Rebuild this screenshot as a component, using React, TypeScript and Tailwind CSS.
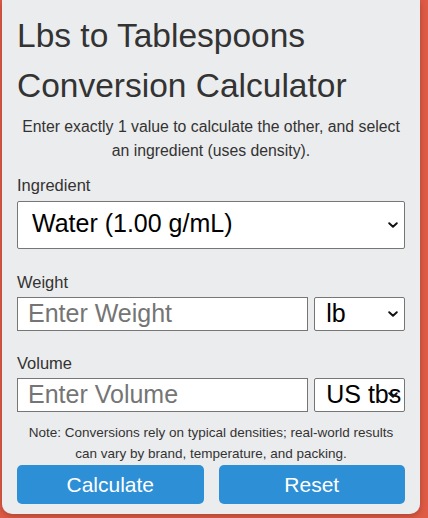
import { useState } from "react";

function Chevron() {
  return (
    <svg
      className="pointer-events-none absolute right-[7px] top-1/2 -translate-y-1/2"
      width="10"
      height="6"
      viewBox="0 0 10 6"
      fill="none"
    >
      <path d="M1.2 1.2 L5 4.8 L8.8 1.2" stroke="#111" strokeWidth="1.9" strokeLinecap="round" strokeLinejoin="round" />
    </svg>
  );
}

export default function App() {
  const [weight, setWeight] = useState("");
  const [volume, setVolume] = useState("");

  return (
    <div className="min-h-screen bg-[#e05b45] font-['Liberation_Sans',Arial,sans-serif] text-[#333]">
      <div className="ml-[2px] w-[418px] rounded-b-[10px] bg-[#ebeced] px-[15px] pb-[10px] shadow-[0_2px_6px_rgba(0,0,0,0.25)]">
        <h1 className="pt-[11px] text-[33.5px] leading-[50px] font-normal text-[#333]">
          Lbs to Tablespoons Conversion Calculator
        </h1>
        <p className="mt-[4px] px-[4px] text-center text-[15.8px] leading-[24px]">
          Enter exactly 1 value to calculate the other, and select an ingredient (uses density).
        </p>

        <label className="mt-[12px] block text-[16.5px] leading-[20px]">Ingredient</label>
        <div className="relative mt-[6px]">
          <select className="block h-[48px] w-full appearance-none rounded-[2px] border border-[#767676] bg-white pb-[2px] pl-[14px] text-[25px] text-black">
            <option>Water (1.00 g/mL)</option>
            <option>All-purpose flour (0.53 g/mL)</option>
            <option>Granulated sugar (0.85 g/mL)</option>
          </select>
          <Chevron />
        </div>

        <label className="mt-[23px] block text-[16.5px] leading-[20px]">Weight</label>
        <div className="mt-[5px] flex gap-[6px]">
          <input
            value={weight}
            onChange={e => setWeight(e.target.value)}
            placeholder="Enter Weight"
            className="h-[34px] w-[292px] min-w-0 border border-[#767676] bg-white px-[10px] text-[25px] text-black placeholder-[#757575]"
          />
          <div className="relative w-[91px]">
            <select className="block h-[34px] w-full appearance-none rounded-[2px] border border-[#767676] bg-white pb-[3px] pl-[11px] pr-0 text-[25px] leading-[28px] text-black">
              <option>lb</option>
              <option>oz</option>
              <option>kg</option>
            </select>
            <Chevron />
          </div>
        </div>

        <label className="mt-[22px] block text-[16.5px] leading-[20px]">Volume</label>
        <div className="mt-[5px] flex gap-[6px]">
          <input
            value={volume}
            onChange={e => setVolume(e.target.value)}
            placeholder="Enter Volume"
            className="h-[34px] w-[292px] min-w-0 border border-[#767676] bg-white px-[10px] text-[25px] text-black placeholder-[#757575]"
          />
          <div className="relative w-[91px]">
            <select className="block h-[34px] w-full appearance-none rounded-[2px] border border-[#767676] bg-white pb-[3px] pl-[11px] pr-0 text-[25px] leading-[28px] text-black">
              <option>US tbs</option>
              <option>US tsp</option>
              <option>US cup</option>
            </select>
            <Chevron />
          </div>
        </div>

        <p className="mt-[10px] px-[8px] text-center text-[13.5px] leading-[21px]">
          Note: Conversions rely on typical densities; real-world results can vary by brand, temperature, and packing.
        </p>

        <div className="mt-[1px] flex gap-[15px]">
          <button className="h-[39px] flex-1 rounded-[5px] bg-[#2d8fd6] text-[21px] text-white">Calculate</button>
          <button
            onClick={() => { setWeight(""); setVolume(""); }}
            className="h-[39px] flex-1 rounded-[5px] bg-[#2d8fd6] text-[21px] text-white"
          >
            Reset
          </button>
        </div>
      </div>
    </div>
  );
}
